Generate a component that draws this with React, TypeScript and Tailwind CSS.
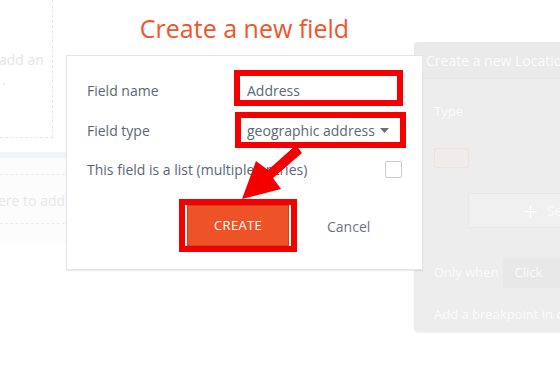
import React from "react";

const font = { fontFamily: '"Open Sans", "Noto Sans", sans-serif' };

function LeftBackground() {
  return (
    <div className="absolute left-0 top-0 w-[70px] h-[250px]">
      <div className="h-[138px] w-[53px] border-r border-b border-dashed border-[#e8e8e8] flex flex-col pt-[50px] text-[14px] leading-[20px] text-[#e6e6e6]">
        <span className="-ml-[1px]">add an</span>
        <span className="ml-[2px]">.</span>
      </div>
      <div className="mt-[14px] h-[6px] bg-[#f1f5f9]" />
      <div className="h-[86px] bg-[#fcfcfc] flex flex-col">
        <div className="mt-[16px] border-t border-dashed border-[#ececec]" />
        <div className="mt-[16px] text-[14px] leading-[20px] text-[#e8e8e8] whitespace-nowrap -ml-[2px]">
          ere to add an
        </div>
        <div className="mt-[12px] border-t border-dashed border-[#ececec]" />
      </div>
    </div>
  );
}

function RightPanel() {
  return (
    <div className="absolute left-[414px] top-[42px] w-[160px] h-[290px] bg-[#ededed] rounded-[4px] shadow-[0_1px_2px_rgba(0,0,0,0.05)] flex flex-col overflow-hidden text-[13px] text-[#fbfbfb] whitespace-nowrap">
      <div className="h-[37px] bg-[#eaeaea] border-b border-dotted border-[#e2e2e2] flex items-center pl-[12px] text-[14px]">
        Create a new Location
      </div>
      <div className="flex flex-col pl-[20px]">
        <div className="mt-[22px] h-[20px] leading-[20px]">Type</div>
        <div className="mt-[27px] w-[35px] h-[20px] border border-[#f3e1da] rounded-[3px] flex items-center justify-center text-[#f5ebe8] text-[13px]">
          Click
        </div>
        <div className="mt-[25px] ml-[34px] h-[35px] bg-[#f0f0f0] border border-[#e8e8e8] flex items-center pl-[54px] gap-[9px]">
          <span className="text-[26px] leading-[26px] font-light text-white">+</span>
          <span className="text-[14px]">Se</span>
        </div>
        <div className="mt-[30px] flex items-center h-[30px]">
          <span>Only when</span>
          <div className="ml-[4px] h-[30px] flex-1 bg-[#e8e8e8] flex items-center pl-[12px]">Click</div>
        </div>
        <div className="mt-[16px] h-[20px] leading-[20px]">Add a breakpoint in de</div>
      </div>
    </div>
  );
}

function Modal() {
  return (
    <div className="absolute left-[66px] top-0 w-[357px] flex flex-col">
      <div className="mt-[10px] h-[36px] leading-[36px] text-center text-[25px] text-[#f0552c]">
        Create a new field
      </div>
      <div className="mt-[9px] h-[215px] bg-white border border-[#e1e4e8] shadow-[0_1px_1px_rgba(0,0,0,0.08)] flex flex-col pl-[20px] pt-[14px] text-[14px] text-[#5b6674]">
        <div className="flex items-center h-[36px]">
          <div className="w-[147px] pt-[5px]">Field name</div>
          <div className="w-[169px] h-[36px] border-[6px] border-[#f50000] bg-white flex items-center pl-[7px] pt-[4px] text-[#5a6776]">
            Address
          </div>
        </div>
        <div className="flex items-center h-[36px] mt-[6px]">
          <div className="w-[148px]">Field type</div>
          <div className="w-[171px] h-[36px] border-[6px] border-[#f50000] bg-white flex items-center pl-[6px] pr-[11px] text-[#5a6776]">
            <span className="flex-1">geographic address</span>
            <svg width="9" height="5" viewBox="0 0 9 5">
              <path d="M0 0 L9 0 L4.5 5 Z" fill="#66707c" />
            </svg>
          </div>
        </div>
        <div className="flex items-center h-[20px] mt-[11px]">
          <div className="w-[298px]">This field is a list (multiple entries)</div>
          <div className="w-[17px] h-[17px] border border-[#c9ccd0] rounded-[2px] bg-white" />
        </div>
        <div className="flex items-center mt-[20px]">
          <div className="ml-[92px] w-[118px] h-[53px] border-[6px] border-[#f50000] bg-white flex items-stretch px-[2px]">
            <div className="flex-1 bg-[#ed5326] border border-[#c94520] flex items-center justify-center pt-[1px] text-white text-[13px] tracking-[0.3px]">
              CREATE
            </div>
          </div>
          <div className="ml-[30px] pt-[2px] text-[#6b7480]">Cancel</div>
        </div>
      </div>
    </div>
  );
}

function Arrow() {
  return (
    <svg className="absolute left-0 top-0 pointer-events-none" width="560" height="369" viewBox="0 0 560 369">
      <polygon
        points="302,153 296,145 268,170 256,161 242,199 281,189 273,178"
        fill="#f50000"
      />
    </svg>
  );
}

export default function App() {
  return (
    <div className="relative w-[560px] h-[369px] overflow-hidden bg-white" style={font}>
      <LeftBackground />
      <RightPanel />
      <Modal />
      <Arrow />
    </div>
  );
}
